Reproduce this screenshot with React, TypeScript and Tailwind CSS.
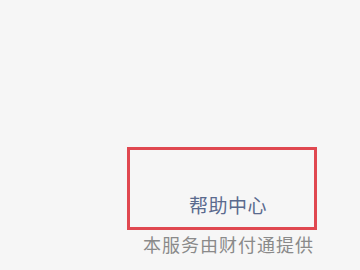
export default function App() {
  return (
    <div
      className="w-[360px] h-[270px] bg-[#f6f6f6] overflow-hidden"
      style={{ fontFamily: '"Noto Sans CJK SC", sans-serif' }}
    >
      <div className="pt-[147px] pl-[127px]">
        <div className="w-[190px] h-[83px] border-[3px] border-[#e04850] flex items-end justify-center pl-[12px] pb-[13px]">
          <span className="text-[19px] leading-none text-[#5a6a8e] tracking-[0.5px]">帮助中心</span>
        </div>
        <div className="pl-[16px] pt-[5px] text-[18px] leading-none text-[#8a8a8a] tracking-[1px] whitespace-nowrap">
          本服务由财付通提供
        </div>
      </div>
    </div>
  );
}
